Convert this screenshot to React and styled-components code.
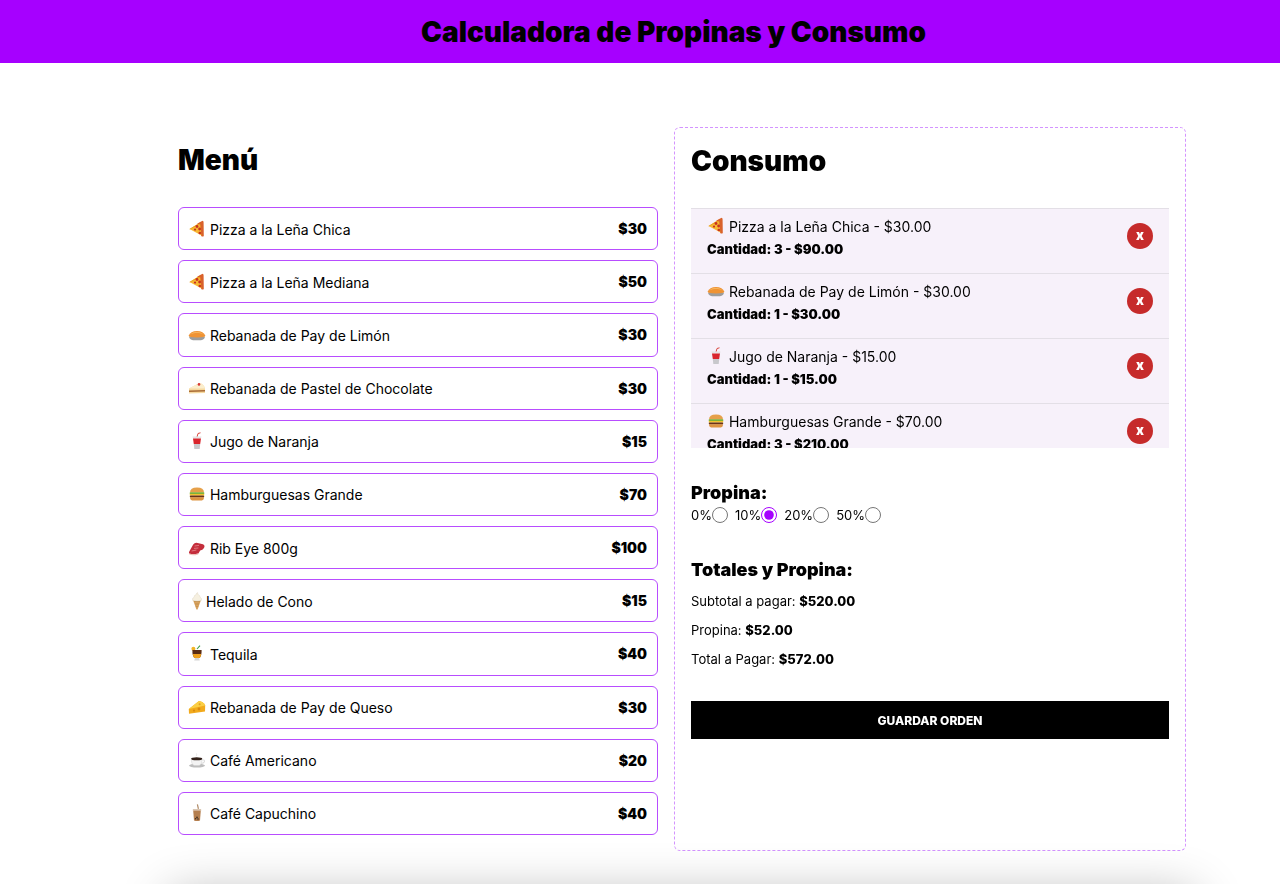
import React from "react";
import styled, { createGlobalStyle } from "styled-components";

const Global = createGlobalStyle`
  html, body { margin: 0; padding: 0; background: #fff; }
  body { font-family: Inter, "Liberation Sans", sans-serif; color: #000; }
  * { box-sizing: border-box; }
`;

const Page = styled.div`
  height: 884px;
  overflow: hidden;
  display: flex;
  flex-direction: column;
`;
const Header = styled.header`
  flex: none;
  height: 63px;
  background: #a600ff;
  display: flex;
  align-items: center;
  justify-content: center;
  padding-left: 67px;
`;
const Title = styled.h1`
  margin: 0;
  font-size: 28px;
  font-weight: 900;
  line-height: 36px;
  letter-spacing: 0;
`;
const Main = styled.main`
  flex: none;
  width: 1008px;
  margin: 64px 0 0 178px;
  display: grid;
  grid-template-columns: 480px 512px;
  column-gap: 16px;
  align-items: start;
`;
const MenuColumn = styled.section`
  padding-top: 15px;
`;
const ColumnTitle = styled.h2`
  margin: 0 0 ${(p) => p.$gap}px;
  font-size: 28px;
  font-weight: 900;
  line-height: ${(p) => p.$line}px;
`;
const MenuList = styled.ul`
  list-style: none;
  margin: 0;
  padding: 0;
  display: flex;
  flex-direction: column;
  gap: 10px;
`;
const MenuRow = styled.li`
  height: 43.18px;
  display: flex;
  align-items: center;
  justify-content: space-between;
  border: 1px solid #b84dff;
  border-radius: 6px;
  padding: 0 10px 0 9px;
  font-size: 14px;
`;
const MenuName = styled.span`
  white-space: pre;
`;
const MenuPrice = styled.span`
  font-weight: 900;
`;
const EmojiBox = styled.svg`
  width: 18px;
  height: 18px;
  display: inline-block;
  vertical-align: -3px;
`;
const Panel = styled.section`
  height: 724px;
  border: 1px dashed #d393ff;
  border-radius: 6px;
  padding: 16px;
`;
const OrderList = styled.ul`
  list-style: none;
  margin: 0 0 34px;
  padding: 0;
  height: 240px;
  overflow-y: scroll;
  border-top: 1px solid #e3dfe6;
  &::-webkit-scrollbar { width: 15px; }
  &::-webkit-scrollbar-track {
    background: #fafafa;
    border-left: 1px solid #e8e8e8;
    border-right: 1px solid #e8e8e8;
  }
  &::-webkit-scrollbar-thumb {
    background: #c1c1c1;
    background-clip: padding-box;
    border-style: solid;
    border-color: transparent;
    border-width: 2px 3px 3px 4px;
    border-radius: 7px;
  }
`;
const OrderRow = styled.li`
  height: 65px;
  display: flex;
  align-items: flex-start;
  justify-content: space-between;
  padding: 8px 16px;
  background: #f7f1fa;
  border-bottom: 1px solid #e3dfe6;
`;
const OrderName = styled.div`
  font-size: 14px;
  line-height: 18px;
  white-space: pre;
`;
const OrderQty = styled.div`
  margin-top: 5px;
  font-size: 13px;
  line-height: 16px;
  font-weight: 900;
`;
const RemoveButton = styled.button`
  flex: none;
  width: 26px;
  height: 26px;
  margin-top: 6px;
  padding: 0 0 2px;
  border: 0;
  border-radius: 50%;
  background: #c62b2b;
  color: #fff;
  font-family: inherit;
  font-size: 13px;
  font-weight: 900;
  line-height: 1;
`;
const SubTitle = styled.h3`
  margin: 0;
  font-size: 18px;
  font-weight: 900;
  line-height: 22px;
`;
const TipRow = styled.div`
  display: flex;
  align-items: center;
  gap: 7px;
  height: 18px;
  margin: 2px 0 35px;
`;
const TipLabel = styled.label`
  display: flex;
  align-items: center;
  font-size: 13px;
`;
const TipRadio = styled.input`
  width: 16px;
  height: 16px;
  margin: 0;
  accent-color: #a600ff;
`;
const TotalLines = styled.div`
  display: flex;
  flex-direction: column;
  gap: 13px;
  margin: 12px 0 34px;
`;
const TotalLine = styled.p`
  margin: 0;
  font-size: 13px;
  line-height: 16px;
  strong { font-weight: 800; }
`;
const SaveButton = styled.button`
  display: block;
  width: 100%;
  height: 38px;
  border: 0;
  background: #000;
  color: #fff;
  font-family: inherit;
  font-size: 12px;
  font-weight: 800;
`;
const BottomShade = styled.div`
  flex: none;
  width: 1024px;
  height: 120px;
  margin: 44px 0 0 170px;
  background: #fff;
  box-shadow: 0 0 50px rgba(0, 0, 0, 0.3);
`;

const drawings = {
  pizza: (
    <>
      <path d="M1.5 9 L13 2 L14.5 16 Z" fill="#f7b733" />
      <path d="M1.5 9 L13 2 L14.5 16 L13 15.5 L12 4 L2 9.6Z" fill="#e8a020" />
      <path d="M9 3.8 L14.5 .8 Q16 1 15.6 3 L15.8 16 Q15 17 13.4 16.3 L12.4 4.6 Z" fill="#d9622b" />
      <circle cx="9" cy="6.5" r="1.4" fill="#c8321f" />
      <circle cx="11.6" cy="9" r="1.4" fill="#c8321f" />
      <circle cx="7" cy="9.6" r="1.1" fill="#c8321f" />
      <circle cx="11.8" cy="13" r="1.3" fill="#c8321f" />
    </>
  ),
  pie: (
    <>
      <path d="M1 10.5 Q1.5 13.8 5 14.2 L13 14.2 Q16.6 13.8 17 10.5 Z" fill="#9d9d9d" />
      <path d="M.6 9.8 Q2.5 5 9 5 Q15.5 5 17.4 9.8 Q17 11.4 9 11.4 Q1 11.4 .6 9.8Z" fill="#ef9334" />
      <path d="M2 8.4 Q9 5.2 16 8.4 Q12 6 9 6 Q5 6 2 8.4Z" fill="#f9c06b" />
    </>
  ),
  juice: (
    <>
      <path d="M9 5 L10 1.5 L12.5 .8" stroke="#d8473e" strokeWidth="1" fill="none" />
      <path d="M4.5 4.6 H13.5 L13 6.4 H5Z" fill="#e4e4e4" />
      <path d="M5 6.4 H13 L12.2 12 H5.8Z" fill="#d9252d" />
      <path d="M5.8 12 H12.2 L11.7 17 H6.3Z" fill="#c8c8cc" />
    </>
  ),
  burger: (
    <>
      <path d="M2 7.4 Q2 2.4 9 2.4 Q16 2.4 16 7.4Z" fill="#e6a04a" />
      <rect x="1.6" y="7.3" width="14.8" height="1.8" rx=".8" fill="#7cb23a" />
      <rect x="1.8" y="9" width="14.4" height="1.6" fill="#f2c12e" />
      <rect x="1.8" y="10.4" width="14.4" height="2" rx=".9" fill="#6a3218" />
      <path d="M2.2 12.3 H15.8 V13.6 Q15.8 15.4 13.8 15.4 H4.2 Q2.2 15.4 2.2 13.6Z" fill="#dd9340" />
    </>
  ),
  steak: (
    <>
      <path d="M1 13 L5.2 5.6 Q7 3 9.6 4 L15 5.2 Q17.4 6.4 16 9 Q14.6 11.4 12.2 11.6 L10.4 14.4 Q5 16 1 14.4Z" fill="#c42e3c" />
      <path d="M1 14.4 Q5 16 10.4 14.4 L10.2 15.4 Q5 17 1.4 15.6Z" fill="#ecc1b8" />
      <path d="M6.6 7 L11 6.4 M3.6 12 L8.4 11 M6 9.4 L10.4 9" stroke="#e47f84" strokeWidth=".9" fill="none" />
    </>
  ),
  cone: (
    <>
      <path d="M5 8 L13 8 L9.6 17.6 H8.4Z" fill="#d8a35f" />
      <path d="M6 9.5 L12 9.5 M7 12 L11 12 M7.8 14.6 L10.2 14.6" stroke="#b98544" strokeWidth=".6" />
      <path d="M4.6 8.4 Q4 5.8 6.2 5.2 Q6 3 8 2.8 Q8.4 .8 9.6 .6 Q9.6 2.4 10.6 3 Q12.2 3.4 12 5.2 Q14.2 6 13.4 8.4 Q9 9.6 4.6 8.4Z" fill="#f6f0e0" stroke="#d9d0bb" strokeWidth=".4" />
    </>
  ),
  tequila: (
    <>
      <circle cx="5.4" cy="3.8" r="2" fill="#f2b428" />
      <path d="M9 4 L12 .6" stroke="#3e9f4a" strokeWidth="1.1" />
      <path d="M4.4 5 H13.6 Q13.8 11 11.4 13 H6.6 Q4.2 11 4.4 5Z" fill="#5a2c14" />
      <path d="M4.8 9 H13.2 Q13 12 11.4 13 H6.6 Q5 12 4.8 9Z" fill="#f0a01c" />
      <path d="M7 13 H11 L11.8 15.6 H6.2Z" fill="#d6d6d6" />
    </>
  ),
  cheese: (
    <>
      <path d="M.8 11 L11 3 Q15 3.4 17.2 7.4 L17 13.4 L1 15.8Z" fill="#f2aa1c" />
      <path d="M.8 11 L11 3 Q15 3.4 17.2 7.4Z" fill="#fbcf45" />
      <circle cx="6" cy="12.6" r="1.1" fill="#d98a10" />
      <circle cx="11" cy="11" r="1.4" fill="#d98a10" />
      <circle cx="11.6" cy="6.2" r="1" fill="#e2a020" />
    </>
  ),
  coffee: (
    <>
      <ellipse cx="9" cy="14.6" rx="8" ry="2" fill="#bdbdbd" />
      <path d="M3.2 7.6 H14.2 Q14.4 13 11.4 14.6 H6 Q3 13 3.2 7.6Z" fill="#f3f3f3" stroke="#c9c9c9" strokeWidth=".4" />
      <ellipse cx="8.7" cy="7.8" rx="5.5" ry="1.5" fill="#33221a" />
      <path d="M14 8.8 Q17 8.6 16.4 10.8 Q15.6 12.4 13.2 12.4" fill="none" stroke="#dcdcdc" strokeWidth="1.1" />
      <path d="M8 5.2 Q9.4 4 8.4 2.4" fill="none" stroke="#e5e5e5" strokeWidth=".9" />
    </>
  ),
  boba: (
    <>
      <path d="M10.4 4.8 L9.4 .4" stroke="#b08a66" strokeWidth="1.2" />
      <path d="M5 5 H13 L13.4 6.6 H4.6Z" fill="#d9c6b2" />
      <path d="M5.2 6.6 H12.8 L12 16.4 Q9 17.4 6 16.4Z" fill="#b57f4f" />
      <circle cx="7.6" cy="14.8" r=".8" fill="#3a2a20" />
      <circle cx="10" cy="15" r=".8" fill="#3a2a20" />
      <circle cx="9" cy="13.4" r=".8" fill="#3a2a20" />
    </>
  ),
};

const Emoji = ({ name }) => (
  <EmojiBox viewBox="0 0 18 18" aria-hidden="true">
    {drawings[name]}
  </EmojiBox>
);

const menu = [
  ["pizza", " Pizza a la Leña Chica", "$30"],
  ["pizza", " Pizza a la Leña Mediana", "$50"],
  ["pie", " Rebanada de Pay de Limón", "$30"],
  ["cake", " Rebanada de Pastel de Chocolate", "$30"],
  ["juice", " Jugo de Naranja", "$15"],
  ["burger", " Hamburguesas Grande", "$70"],
  ["steak", " Rib Eye 800g", "$100"],
  ["cone", "Helado de Cono", "$15"],
  ["tequila", " Tequila", "$40"],
  ["cheese", " Rebanada de Pay de Queso", "$30"],
  ["coffee", " Café Americano", "$20"],
  ["boba", " Café Capuchino", "$40"],
];
drawings.cake = (
  <>
    <path d="M1 9.5 L11.5 4 Q16 5 17 9.5 L17 14 L1 14.6Z" fill="#f6d9a0" />
    <path d="M1 9.5 L11.5 4 Q16 5 17 9.5Z" fill="#fbeecd" />
    <path d="M1 11.6 L17 11 V12.4 L1 13Z" fill="#a86a34" />
    <circle cx="11" cy="5.4" r="1.3" fill="#d63a35" />
  </>
);

const order = [
  ["pizza", " Pizza a la Leña Chica - $30.00", "Cantidad: 3 - $90.00"],
  ["pie", " Rebanada de Pay de Limón - $30.00", "Cantidad: 1 - $30.00"],
  ["juice", " Jugo de Naranja - $15.00", "Cantidad: 1 - $15.00"],
  ["burger", " Hamburguesas Grande - $70.00", "Cantidad: 3 - $210.00"],
  ["steak", " Rib Eye 800g - $100.00", "Cantidad: 1 - $100.00"],
  ["cone", "Helado de Cono - $15.00", "Cantidad: 1 - $15.00"],
  ["tequila", " Tequila - $40.00", "Cantidad: 1 - $40.00"],
  ["coffee", " Café Americano - $20.00", "Cantidad: 1 - $20.00"],
];

const tips = [
  ["0%", false],
  ["10%", true],
  ["20%", false],
  ["50%", false],
];

export default function App() {
  return (
    <Page>
      <Global />
      <Header>
        <Title>Calculadora de Propinas y Consumo</Title>
      </Header>
      <Main>
        <MenuColumn>
          <ColumnTitle $line={36} $gap={29}>Menú</ColumnTitle>
          <MenuList>
            {menu.map(([icon, name, price]) => (
              <MenuRow key={name}>
                <MenuName>
                  <Emoji name={icon} />
                  {name}
                </MenuName>
                <MenuPrice>{price}</MenuPrice>
              </MenuRow>
            ))}
          </MenuList>
        </MenuColumn>
        <Panel>
          <ColumnTitle $line={34} $gap={30}>Consumo</ColumnTitle>
          <OrderList>
            {order.map(([icon, name, qty]) => (
              <OrderRow key={name}>
                <div>
                  <OrderName>
                    <Emoji name={icon} />
                    {name}
                  </OrderName>
                  <OrderQty>{qty}</OrderQty>
                </div>
                <RemoveButton type="button">x</RemoveButton>
              </OrderRow>
            ))}
          </OrderList>
          <SubTitle>Propina:</SubTitle>
          <TipRow>
            {tips.map(([label, checked]) => (
              <TipLabel key={label}>
                {label}
                <TipRadio type="radio" name="tip" defaultChecked={checked} />
              </TipLabel>
            ))}
          </TipRow>
          <SubTitle>Totales y Propina:</SubTitle>
          <TotalLines>
            <TotalLine>Subtotal a pagar: <strong>$520.00</strong></TotalLine>
            <TotalLine>Propina: <strong>$52.00</strong></TotalLine>
            <TotalLine>Total a Pagar: <strong>$572.00</strong></TotalLine>
          </TotalLines>
          <SaveButton type="button">GUARDAR ORDEN</SaveButton>
        </Panel>
      </Main>
      <BottomShade />
    </Page>
  );
}
